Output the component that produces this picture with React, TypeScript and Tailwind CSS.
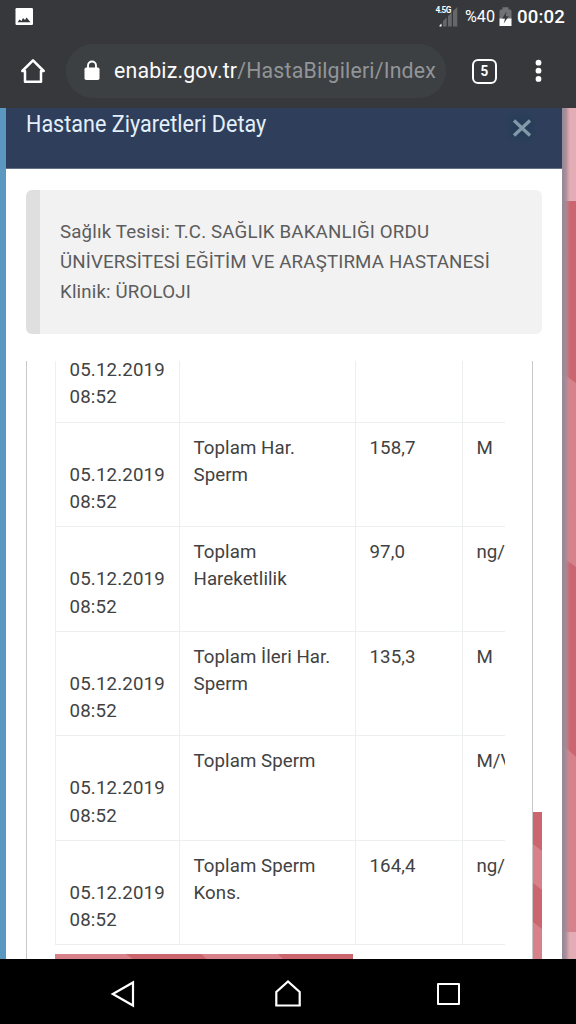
import type { ReactNode } from "react";

type Result = { name: string[]; value: string; unit: string };

const results: Result[] = [
  { name: ["Toplam Har.", "Sperm"], value: "158,7", unit: "M" },
  { name: ["Toplam", "Hareketlilik"], value: "97,0", unit: "ng/mL" },
  { name: ["Toplam İleri Har.", "Sperm"], value: "135,3", unit: "M" },
  { name: ["Toplam Sperm"], value: "", unit: "M/Vol" },
  { name: ["Toplam Sperm", "Kons."], value: "164,4", unit: "ng/mL" },
];

function StatusBar() {
  return (
    <div className="flex h-[34px] items-center text-white">
      <svg className="ml-[15px] h-[18px] w-[18px]" viewBox="0 0 18 18">
        <rect x="0.5" y="0" width="17.500" height="17" rx="1.2" fill="#fff" />
        <path d="M2.600 14.200 4.500 11.500l2 1.500 1.500-3 2 2 1.500-2.500 4 4.700z" fill="#37383b" />
      </svg>
      <svg className="ml-[402px] h-[24px] w-[24px]" viewBox="0 0 24 24">
        <text x="0.5" y="7.600" fontFamily="Roboto, sans-serif" fontWeight="700" fontSize="8.3" textLength="16" fill="#fff">4.5G</text>
        <path d="M4.5 21.500V20.500l2-2v3z" fill="#fff" />
        <path d="M8 21.500V16l3.700-3.500v9zM13 21.500V11l3.800-3.500v14zM18 21.500V6l4.300-4v19.500z" fill="#66676a" />
      </svg>
      <span className="ml-[6px] w-[31px] whitespace-nowrap text-[16.200px] leading-none">%40</span>
      <svg className="ml-[3px] h-[20px] w-[13px]" viewBox="0 0 13 20">
        <path d="M.5 12V4q0-1.500 1.500-1.500H3.500V.2h6v2.300h1.500q1.500 0 1.500 1.500v8z" fill="#707174" />
        <path d="M.5 11.500h12v7.500H.5z" fill="#fff" />
        <path d="M7.500 4.500 3.300 11.500h2.700L4.800 16.500l4.800-7.200H6.700z" fill="#37383b" />
      </svg>
      <span className="ml-[5px] whitespace-nowrap text-[18.600px] font-medium leading-none tracking-[0.150px]">00:02</span>
    </div>
  );
}

function Toolbar() {
  return (
    <div className="flex h-[74px] items-center">
      <svg className="ml-[19px] h-[28px] w-[28px]" viewBox="0 0 28 28" fill="none" stroke="#fff" strokeWidth="2.500" strokeLinejoin="round">
        <path d="M14 3.300 3.300 14H6v10.700h16V14h2.700z" />
      </svg>
      <div className="ml-[19px] flex h-[54px] w-[380px] items-center rounded-full bg-[#3d4043]">
        <svg className="ml-[18px] h-[22px] w-[16px]" viewBox="0 0 16 22">
          <rect x="0.500" y="7.500" width="15" height="12.500" rx="1.700" fill="#fff" />
          <path d="M4 8V5.500a4 4 0 0 1 8 0V8" fill="none" stroke="#fff" strokeWidth="1.900" />
        </svg>
        <span className="ml-[14px] w-[322px] overflow-hidden whitespace-nowrap text-[21.300px] leading-[30px] tracking-[0.180px] text-[#929598]">
          <span className="text-[#fafafa]">enabiz.gov.tr</span>/HastaBilgileri/Index
        </span>
      </div>
      <div className="ml-[26px] flex h-[25px] w-[25px] shrink-0 items-center justify-center rounded-[6px] border-[2.500px] border-white text-[15px] font-bold leading-none text-white">
        <span className="scale-x-[0.900]">5</span>
      </div>
      <svg className="ml-[37px] h-[24px] w-[8px] shrink-0" viewBox="0 0 8 24" fill="#fff">
        <circle cx="4.500" cy="3.700" r="2.900" />
        <circle cx="4.500" cy="11.700" r="2.900" />
        <circle cx="4.500" cy="19.900" r="2.900" />
      </svg>
    </div>
  );
}

function Cell({ className, children }: { className: string; children?: ReactNode }) {
  return <div className={`shrink-0 border-r border-[#ebefef] pl-[14px] pt-[12px] ${className}`}>{children}</div>;
}

function DateText() {
  return (
    <div className="tracking-[0.150px]">
      <div>05.12.2019</div>
      <div>08:52</div>
    </div>
  );
}

function ResultsTable() {
  return (
    <div className="w-[450px] overflow-hidden whitespace-nowrap text-[18.700px] leading-[27.200px] text-[#424242]">
      <div className="flex h-[61.500px] border-b border-l border-b-[#ebefef] border-l-[#f0f0f0]">
        <div className="w-[123.500px] shrink-0 border-r border-[#ebefef] pl-[13.500px]">
          <div className="-mt-[4.200px]"><DateText /></div>
        </div>
        <Cell className="w-[176px]" />
        <Cell className="w-[107px]" />
      </div>
      {results.map((r, i) => (
        <div key={i} className="flex h-[104.500px] border-b border-l border-b-[#ebefef] border-l-[#f0f0f0]">
          <div className="w-[123.500px] shrink-0 border-r border-[#ebefef] pl-[13.500px] pt-[39.300px]"><DateText /></div>
          <Cell className="w-[176px] tracking-[0.060px]">
            {r.name.map((line) => <div key={line}>{line}</div>)}
          </Cell>
          <Cell className="w-[107px] tracking-[0.100px]">{r.value}</Cell>
          <div className="pl-[14px] pt-[12px]">{r.unit}</div>
        </div>
      ))}
      <svg className="mt-[9px] block h-[6px] w-[298px]" viewBox="0 0 298 6" preserveAspectRatio="none">
        <path d="M0 0h298v6H0z" fill="#d7818a" />
        <path d="M71 0h75l7 6H79zM223 0h75v6h-69z" fill="#cb666e" />
      </svg>
    </div>
  );
}

function Dialog() {
  return (
    <div className="flex w-[556px] shrink-0 flex-col bg-white">
      <div className="flex h-[60.500px] shrink-0 justify-between border-b border-[#65708a] bg-[#2f3f5b] pl-[20px] pr-[20px] pt-[1px]">
        <h1 className="origin-left scale-x-[0.895] whitespace-nowrap text-[24.100px] leading-[30px] text-[#e3f0fc]">
          Hastane Ziyaretleri Detay
        </h1>
        <div className="flex h-[38px] w-[42px] items-center justify-center rounded-full bg-[radial-gradient(circle,#263d58_25%,transparent_68%)]">
          <svg className="ml-[1px] h-[20px] w-[20px]" viewBox="0 0 20 20">
            <path d="m2 2.500 16 15m0-15-16 15" stroke="#8299a9" strokeWidth="3.300" />
          </svg>
        </div>
      </div>
      <div className="ml-[20px] mt-[21.500px] h-[144px] w-[516px] shrink-0 rounded-[6px] border-l-[14px] border-[#dfdfdf] bg-[#f2f2f2] pl-[20px] pt-[27px] text-[18.700px] leading-[30px] tracking-[0.160px] text-[#5c5c5c]">
        <p className="whitespace-nowrap">Sağlık Tesisi: T.C. SAĞLIK BAKANLIĞI ORDU</p>
        <p className="whitespace-nowrap">ÜNİVERSİTESİ EĞİTİM VE ARAŞTIRMA HASTANESİ</p>
        <p className="whitespace-nowrap">Klinik: ÜROLOJI</p>
      </div>
      <div className="ml-[20px] mt-[27px] flex h-[598px] w-[516px] overflow-hidden">
        <div className="w-[507px] shrink-0 overflow-hidden border-x border-[#c8c8c8] pl-[28px]">
          <ResultsTable />
        </div>
        <svg className="mt-[451px] h-[147px] w-[9px] shrink-0" viewBox="0 0 9 147" preserveAspectRatio="none">
          <path d="M0 0h9v147H0z" fill="#d7818a" />
          <path d="M0 0h9v39L0 32zM0 71l9 7v39l-9-7z" fill="#cb666e" />
        </svg>
      </div>
    </div>
  );
}

function Backdrop() {
  return (
    <svg className="h-[851px] w-[14px] shrink-0" viewBox="0 0 14 851">
      <defs>
        <linearGradient id="edgeShade">
          <stop offset="0" stopColor="#958895" />
          <stop offset="0.500" stopColor="#a18c98" stopOpacity="0.900" />
          <stop offset="1" stopColor="#b98e99" stopOpacity="0" />
        </linearGradient>
      </defs>
      <path d="M0 0h14v851H0z" fill="#d7828b" />
      <path d="M0 0h14v93H0zM0 824h14v27H0z" fill="#e4adb5" />
      <path d="M0 93h14v182L0 265zM0 449l14 10v190L0 636z" fill="#cb6570" />
      <path d="M0 0h8v851H0z" fill="url(#edgeShade)" />
    </svg>
  );
}

function NavigationBar() {
  return (
    <div className="flex h-[65px] items-start bg-black">
      <svg className="ml-[110px] mt-[21px] h-[28px] w-[26px]" viewBox="0 0 26 28" fill="none" stroke="#fff" strokeWidth="2.200">
        <path d="M23 2.500v23L2.800 14z" />
      </svg>
      <svg className="ml-[138px] mt-[20px] h-[29px] w-[28px]" viewBox="0 0 28 29" fill="none" stroke="#fff" strokeWidth="2.200">
        <path d="M2.300 26.500V13L14 2.500 25.700 13v13.500z" />
      </svg>
      <div className="ml-[135px] mt-[24px] h-[22px] w-[23px] rounded-[1px] border-[2.500px] border-white" />
    </div>
  );
}

export default function App() {
  return (
    <main className="h-[1024px] w-[576px] overflow-hidden bg-black font-['Roboto',sans-serif]">
      <header className="h-[108px] bg-[#37383b]">
        <StatusBar />
        <Toolbar />
      </header>
      <section className="flex h-[851px] overflow-hidden">
        <div className="w-[6px] shrink-0 bg-[#5a98c1]" />
        <Dialog />
        <Backdrop />
      </section>
      <NavigationBar />
    </main>
  );
}
